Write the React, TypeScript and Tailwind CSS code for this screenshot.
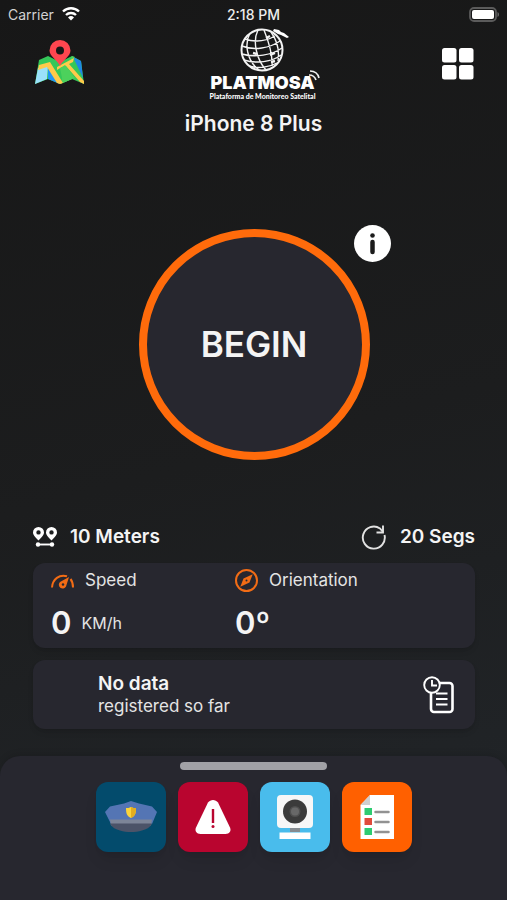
import type { ReactNode } from "react";

function MapIcon() {
  return (
    <svg viewBox="0 0 50 46" className="h-[46px] w-[50px]" aria-hidden="true">
      <path d="M4 20 13 16 25 22 37 16 46 21 49 44 37 39 25 44 13 39 0 44Z" fill="#35c759" />
      <path d="M3 28 13 26 12 39 0 44Z" fill="#9be1fb" />
      <path d="M13 26 23 42 25 44 13 39Z" fill="#2196f3" />
      <path d="M38 17 46 21 48 38Z" fill="#1e88e5" />
      <path d="M37 16 40 17 32 23 25 26 37 39 25 44Z" fill="#4cd15c" />
      <path d="M4 25 15 22 28 43 25 44 22 43 12 27 3 30Z" fill="#ffca4b" />
      <path d="M22 27 39 18 38 22 34 24 49 41 49 44 45 42 30 25 22 30Z" fill="#ffca4b" />
      <path d="M25 28 31 26 40 38 37 39 28 43Z" fill="#4cd15c" />
      <path d="M25 26C22 20 14.500 16 14.500 10.500a10.500 10.500 0 0 1 21 0C35.500 16 28 20 25 26Z" fill="#ff464f" />
      <circle cx="25" cy="10.500" r="4" fill="#181818" />
    </svg>
  );
}

function Logo() {
  return (
    <div className="relative flex w-[108px] flex-col items-center">
      <svg viewBox="0 0 56 46" className="h-[46px] w-14" fill="none" stroke="#f4f4f4" strokeWidth="1.400" aria-hidden="true">
        <circle cx="28" cy="22" r="20.500" strokeWidth="2" />
        <path d="M16 5C10 16 13 33 25 42M24 2C18 14 23 32 32 42M30 2C34 12 39 25 38 38M37 4C42 11 46 20 44 33M11 11C23 15 34 12 41 8M8 18C20 23 36 20 46 13M8 26C21 30 38 27 48 20M10 32C22 36 38 34 47 27M15 38C24 41 36 39 43 35" />
        <path d="m36 27 5-2M32 10l4-2M37 34l4-1M19 25l4 1" strokeWidth="2.400" />
        <path d="m40 1 5 1 2 2 3 1 5 4-2 1-6-3-3-1-5-3Z" fill="#fff" stroke="none" />
      </svg>
      <div className="text-[18px] leading-[18px] font-black text-white">PLATMOSA</div>
      <div className="font-[Lato,sans-serif] text-[7px] leading-2 font-black whitespace-nowrap text-white">
        Plataforma de Monitoreo Satelital
      </div>
      <svg viewBox="0 0 12 12" className="absolute top-[42px] -right-1 size-3" fill="none" stroke="#eee" strokeWidth="1.700" aria-hidden="true">
        <path d="M2 1c5 0 8 3 9 7M1 5c3 0 6 2 7 5" />
      </svg>
    </div>
  );
}

function GridIcon() {
  return (
    <svg viewBox="0 0 32 32" className="size-8" fill="#fff" aria-hidden="true">
      <rect x="0" y="0" width="14.500" height="14.500" rx="2.500" />
      <rect x="17" y="0" width="14.500" height="14.500" rx="2.500" />
      <rect x="0" y="17" width="14.500" height="14.500" rx="2.500" />
      <rect x="17" y="17" width="14.500" height="14.500" rx="2.500" />
    </svg>
  );
}

function StatusBar() {
  return (
    <div className="grid h-7 grid-cols-3 items-center px-2 text-[14px] text-[#ededed]">
      <div className="flex items-center gap-2">
        <span className="text-[#d2d2d2]">Carrier</span>
        <svg viewBox="0 0 18 14" className="h-[14px] w-[18px]" fill="none" stroke="#fff" strokeWidth="2.400" aria-hidden="true">
          <path d="M1 4.500a11.500 11.500 0 0 1 16 0M4 8a7.300 7.300 0 0 1 10 0" />
          <path d="M9 13.500 6 10.500a4.400 4.400 0 0 1 6 0Z" fill="#fff" stroke="none" />
        </svg>
      </div>
      <span className="text-center font-medium">2:18 PM</span>
      <svg viewBox="0 0 31 15" className="h-[15px] w-[31px] justify-self-end" aria-hidden="true">
        <rect x="2" y="1" width="26" height="13" rx="4" fill="none" stroke="#5b5b5b" strokeWidth="1.800" />
        <rect x="4" y="3" width="22" height="9" rx="2" fill="#fff" />
        <path d="M29.500 5c2 1 2 4 0 5Z" fill="#686868" />
      </svg>
    </div>
  );
}

function PinsIcon() {
  return (
    <svg viewBox="0 0 26 22" className="h-[22px] w-[26px]" aria-hidden="true">
      <path fillRule="evenodd" fill="#fff" d="M5.500 1A5.500 5.500 0 0 1 11 6.500c0 3-3 5-5.500 8-2.500-3-5.500-5-5.500-8A5.500 5.500 0 0 1 5.500 1Zm0 3.200a2.200 2.200 0 1 0 0 4.400 2.200 2.200 0 0 0 0-4.400ZM18.500 1A5.500 5.500 0 0 1 24 6.500c0 3-3 5-5.500 8-2.500-3-5.500-5-5.500-8A5.500 5.500 0 0 1 18.500 1Zm0 3.200a2.200 2.200 0 1 0 0 4.400 2.200 2.200 0 0 0 0-4.400Z" />
      <path d="M5 18.500h14" stroke="#fff" strokeWidth="1.900" />
      <circle cx="5" cy="18.500" r="2.200" fill="#fff" />
      <circle cx="19" cy="18.500" r="2.200" fill="#fff" />
    </svg>
  );
}

function RefreshIcon() {
  return (
    <svg viewBox="0 0 26 26" className="size-[26px]" fill="none" stroke="#e2e2e2" strokeWidth="1.900" aria-hidden="true">
      <path d="M23.500 11a11 11 0 1 1-4.500-6.500L22 8" />
      <path d="M22 1.500v7H15.500" />
    </svg>
  );
}

function GaugeIcon() {
  return (
    <svg viewBox="0 0 24 16" className="h-4 w-6" fill="none" stroke="#f26c15" strokeWidth="2" aria-hidden="true">
      <path d="M1 14.500C1.500 6 8.500 1 16 3.200M19.500 6c1.800 2.200 2.500 5 2.500 8.500" />
      <path d="M18 4 15 13.500a3.800 3.800 0 1 1-6-4.500Z" fill="#f26c15" stroke="none" />
      <circle cx="12" cy="11.500" r="1.200" fill="#27272f" stroke="none" />
    </svg>
  );
}

function CompassIcon() {
  return (
    <svg viewBox="0 0 24 24" className="size-6" fill="none" stroke="#f26c15" strokeWidth="2" aria-hidden="true">
      <circle cx="11.500" cy="11.500" r="10.500" />
      <path d="m17.700 5.300-3.200 8.200-9.200 4.200 3.200-8.200Z" fill="#f26c15" stroke="none" />
      <circle cx="11.500" cy="11.500" r="1" fill="#27272f" stroke="none" />
    </svg>
  );
}

function HistoryIcon() {
  return (
    <svg viewBox="0 0 32 38" className="h-[38px] w-8" fill="none" stroke="#fff" aria-hidden="true">
      <path d="M17 7h9.500a3 3 0 0 1 3 3v23a3 3 0 0 1-3 3H11a3 3 0 0 1-3-3V17" strokeWidth="2.600" />
      <path d="M13 17.500h11.500M13 23h11.500M13 28.500h11.500" strokeWidth="1.900" />
      <circle cx="9" cy="9" r="7.800" strokeWidth="1.900" />
      <path d="M9 4v5.500h5" strokeWidth="1.900" />
    </svg>
  );
}

function PoliceIcon() {
  return (
    <svg viewBox="0 0 70 70" className="size-full" aria-hidden="true">
      <path d="M9 30 14 24.500 28 21.500 35 19 43 21.500 56 24.500 61 30 56 42 15 42Z" fill="#5475b4" />
      <path d="M14 37.500h42l-1 6H15Z" fill="#7d8598" />
      <path d="M14 41.500h42c-2 4-6 6-10 7-7 2-15 2-22 0-4-1-8-3-10-7Z" fill="#4c5368" />
      <path d="M30 26c2 0 3 0 5-1 2 1 3 1 5 1 0 6-1 8-5 10-4-2-5-4-5-10Z" fill="#fbd43a" />
      <path d="M35 25c2 1 3 1 5 1 0 6-1 8-5 10Z" fill="#e3ad1e" />
    </svg>
  );
}

function AlertIcon() {
  return (
    <svg viewBox="0 0 70 70" className="size-full" aria-hidden="true">
      <path d="M30 20.500c2.500-3.500 7.500-3.500 10 0l12 25c1.500 3.500-.5 6.500-4.500 6.500H22.500c-4 0-6-3-4.500-6.500Z" fill="#fff" />
      <path d="M35 27v14" stroke="#b9052f" strokeWidth="2.400" />
      <circle cx="35" cy="44.500" r="1.500" fill="#b9052f" />
    </svg>
  );
}

function CameraIcon() {
  return (
    <svg viewBox="0 0 70 70" className="size-full" aria-hidden="true">
      <path d="M30 44h10v6H30Z" fill="#858b90" />
      <rect x="17" y="13" width="36" height="33" rx="4" fill="#f7f7f7" />
      <path d="M19.500 50.500h31v6.500h-31Z" fill="#fff" />
      <circle cx="35" cy="29.500" r="12" fill="#3b3b3b" />
      <circle cx="35" cy="29.500" r="5.500" fill="#505050" />
      <circle cx="35" cy="29.500" r="4" fill="#686868" />
    </svg>
  );
}

function ChecklistIcon() {
  return (
    <svg viewBox="0 0 70 70" className="size-full" aria-hidden="true">
      <path d="M28 13h24v44H18.500V23Z" fill="#fff" />
      <path d="M28 13v10h-9.500Z" fill="#cfcfcf" />
      <path d="M22.500 26h7.500v7h-7.500ZM22.500 46h7.500v7h-7.500Z" fill="#2ecc71" />
      <path d="M22.500 36h7.500v7h-7.500Z" fill="#e14b3b" />
      <path d="M33.500 30h13M33.500 40h13M33.500 50h13" stroke="#929292" strokeWidth="2.500" strokeLinecap="round" />
    </svg>
  );
}

function Tile({ label, color, children }: { label: string; color: string; children: ReactNode }) {
  return (
    <button type="button" aria-label={label} className={`size-[70px] rounded-xl shadow-lg ${color}`}>
      {children}
    </button>
  );
}

export default function App() {
  return (
    <div className="flex min-h-screen flex-col bg-linear-165 from-[#171717] via-[#1c1d1e] to-[#22262a] font-[Inter,'Liberation_Sans',sans-serif] text-[#f4f4f4]">
      <StatusBar />
      <header className="grid grid-cols-3 items-start pr-[33px] pl-[35px]">
        <button type="button" aria-label="Map" className="mt-3 justify-self-start">
          <MapIcon />
        </button>
        <div className="justify-self-center pl-4">
          <Logo />
        </div>
        <button type="button" aria-label="Menu" className="mt-5 justify-self-end">
          <GridIcon />
        </button>
      </header>
      <h1 className="mt-2 text-center text-[21px] leading-8 font-semibold">iPhone 8 Plus</h1>

      <main className="flex flex-1 flex-col pr-8 pl-[33px]">
        <div className="flex flex-1 items-center justify-center pt-6">
          <div className="relative">
            <button type="button" className="size-[231px] rounded-full border-8 border-[#ff6b0b] bg-[#27272f] text-[35px] font-semibold">
              BEGIN
            </button>
            <button type="button" aria-label="Information" className="absolute -top-1 -right-[21px] size-[37px]">
              <svg viewBox="0 0 37 37" className="size-full" aria-hidden="true">
                <circle cx="18.500" cy="18.500" r="18.500" fill="#fff" />
                <circle cx="18.500" cy="10.500" r="2.300" fill="#1b1b1b" />
                <path d="M18.500 17v10" stroke="#1b1b1b" strokeWidth="4.500" strokeLinecap="round" />
              </svg>
            </button>
          </div>
        </div>

        <div className="flex h-[26px] items-center justify-between text-[19px] font-semibold">
          <div className="flex items-center gap-[11px]">
            <PinsIcon />
            <span>10 Meters</span>
          </div>
          <div className="flex items-center gap-[13px]">
            <RefreshIcon />
            <span>20 Segs</span>
          </div>
        </div>

        <section className="mt-[13px] grid h-[85px] grid-cols-[184px_1fr] rounded-xl bg-[#27272f] px-[18px] pt-[6px] shadow-md">
          <div>
            <h2 className="flex h-6 items-center gap-[10px] text-[17px] text-[#e4e4e4]">
              <GaugeIcon />
              Speed
            </h2>
            <div className="mt-3 flex items-center gap-[10px] leading-9">
              <span className="text-[31px] font-semibold">0</span>
              <span className="text-[16px] text-[#e4e4e4]">KM/h</span>
            </div>
          </div>
          <div>
            <h2 className="flex h-6 items-center gap-[10px] text-[17px] text-[#e4e4e4]">
              <CompassIcon />
              Orientation
            </h2>
            <div className="mt-3 text-[31px] leading-9 font-semibold">0º</div>
          </div>
        </section>

        <section className="mt-3 mb-[27px] flex h-[69px] items-center justify-between rounded-xl bg-[#27272f] pr-5 pl-[65px] shadow-md">
          <div>
            <div className="text-[19px] leading-[22px] font-semibold">No data</div>
            <div className="text-[17px] leading-[22px] text-[#e4e4e4]">registered so far</div>
          </div>
          <button type="button" aria-label="History">
            <HistoryIcon />
          </button>
        </section>
      </main>

      <footer className="flex h-36 flex-col items-center rounded-t-[20px] bg-[#27272f] pt-[6px] shadow-[0_-2px_6px_rgba(0,0,0,0.12)]">
        <div className="h-2 w-[147px] rounded-full bg-[#a1a1a6]" />
        <nav className="mt-3 flex gap-3" aria-label="Actions">
          <Tile label="Police" color="bg-[#034b6c]">
            <PoliceIcon />
          </Tile>
          <Tile label="Alert" color="bg-[#b9052f]">
            <AlertIcon />
          </Tile>
          <Tile label="Camera" color="bg-[#49bcec]">
            <CameraIcon />
          </Tile>
          <Tile label="Checklist" color="bg-[#ff6000]">
            <ChecklistIcon />
          </Tile>
        </nav>
      </footer>
    </div>
  );
}
